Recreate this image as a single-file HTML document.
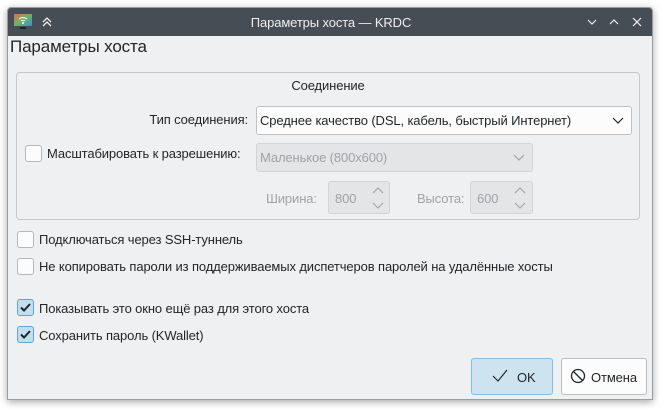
<!DOCTYPE html>
<html><head><meta charset="utf-8"><style>
*{box-sizing:border-box;margin:0;padding:0}
body{width:667px;height:410px;background:#fff;font-family:"Liberation Sans","DejaVu Sans",sans-serif;font-size:13px;color:#232629;position:relative;overflow:hidden}
.abs{position:absolute}
.win{left:7px;top:7px;width:646px;height:393px;background:#eff0f1;border:1px solid #9a9ea3;box-shadow:0 2px 8px rgba(0,0,0,.35);border-radius:4px 4px 0 0;overflow:hidden}
.title{left:0;top:0;width:646px;height:28px;background:#474d54;color:#eceff1;font-size:13px}
.t{white-space:nowrap;letter-spacing:-0.12px}
.cb{width:17px;height:17px;border:1px solid #b5b8bb;border-radius:3px;background:#fcfcfc}
.cbc{background:#c2dff0;border-color:#5fa3d3}
.combo{border:1px solid #bfc2c5;border-radius:3px;background:#fcfcfc}
.dis{background:#e3e5e7;border-color:#d2d4d6;color:#a0a3a6}
.btn{border:1px solid #bcbfc2;border-radius:3px;background:#fcfcfc}
</style></head><body>
<div class="abs win">
 <div class="abs title">
  <svg class="abs" style="left:6px;top:6px" width="18" height="16"><defs><linearGradient id="g" x1="0" y1="0" x2="1" y2="1"><stop offset="0" stop-color="#e06a4a"/><stop offset=".5" stop-color="#6bb36a"/><stop offset="1" stop-color="#3d8ad8"/></linearGradient></defs><rect x="0" y="0" width="18" height="12" fill="url(#g)"/><rect x="6" y="13" width="6" height="2" fill="#222"/><path d="M5 5 Q9 2 13 5 M7 7 Q9 5.5 11 7" stroke="#fff" stroke-width="1" fill="none"/><circle cx="9" cy="9" r="1" fill="#fff"/></svg>
  <svg class="abs" style="left:33px;top:8px" width="12" height="12"><path d="M2 6 L6 2 L10 6 M2 10 L6 6 L10 10" stroke="#eceff1" stroke-width="1.3" fill="none"/></svg>
  <div class="abs t" style="left:0;width:646px;text-align:center;top:7px">Параметры хоста — KRDC</div>
  <svg class="abs" style="left:578px;top:8px" width="62" height="12" stroke="#eceff1" stroke-width="1.2" fill="none"><path d="M2 4 L6 8 L10 4"/><path d="M24 8 L28 4 L32 8"/><path d="M47 2 L55 10 M55 2 L47 10"/></svg>
 </div>
 <div class="abs t" style="left:2px;top:29px;font-size:17px">Параметры хоста</div>
 <div class="abs" style="left:8px;top:64px;width:624px;height:148px;border:1px solid #c5c8cb;border-radius:4px"></div>
 <div class="abs t" style="left:0;width:640px;text-align:center;top:70px">Соединение</div>
 <div class="abs t" style="left:40px;width:200px;text-align:right;top:104px">Тип соединения:</div>
 <div class="abs combo" style="left:248px;top:98px;width:376px;height:29px"></div>
 <div class="abs t" style="left:252px;top:105px">Среднее качество (DSL, кабель, быстрый Интернет)</div>
 <svg class="abs" style="left:604px;top:109px" width="12" height="8"><path d="M1 1 L6 6 L11 1" stroke="#232629" stroke-width="1.2" fill="none"/></svg>
 <div class="abs cb" style="left:17px;top:137px"></div>
 <div class="abs t" style="left:39px;top:138px">Масштабировать к разрешению:</div>
 <div class="abs combo dis" style="left:248px;top:135px;width:277px;height:29px"></div>
 <div class="abs t" style="left:252px;top:142px;color:#a0a3a6">Маленькое (800x600)</div>
 <svg class="abs" style="left:505px;top:146px" width="12" height="8"><path d="M1 1 L6 6 L11 1" stroke="#a0a3a6" stroke-width="1.2" fill="none"/></svg>
 <div class="abs t" style="left:258px;top:183px;color:#a0a3a6">Ширина:</div>
 <div class="abs combo dis" style="left:320px;top:173px;width:62px;height:33px"></div>
 <div class="abs t" style="left:327px;top:183px;color:#a0a3a6">800</div>
 <svg class="abs" style="left:364px;top:178px" width="12" height="24" stroke="#a0a3a6" stroke-width="1.1" fill="none"><path d="M1 7 L6 2 L11 7 M1 17 L6 22 L11 17"/></svg>
 <div class="abs t" style="left:409px;top:183px;color:#a0a3a6">Высота:</div>
 <div class="abs combo dis" style="left:462px;top:173px;width:63px;height:33px"></div>
 <div class="abs t" style="left:469px;top:183px;color:#a0a3a6">600</div>
 <svg class="abs" style="left:506px;top:178px" width="12" height="24" stroke="#a0a3a6" stroke-width="1.1" fill="none"><path d="M1 7 L6 2 L11 7 M1 17 L6 22 L11 17"/></svg>
 <div class="abs cb" style="left:9px;top:223px"></div>
 <div class="abs t" style="left:31px;top:224px">Подключаться через SSH-туннель</div>
 <div class="abs cb" style="left:9px;top:250px"></div>
 <div class="abs t" style="left:31px;top:251px">Не копировать пароли из поддерживаемых диспетчеров паролей на удалённые хосты</div>
 <div class="abs cb cbc" style="left:9px;top:291px"></div>
 <svg class="abs" style="left:11px;top:294px" width="13" height="11"><path d="M2 5.5 L5 8.5 L11 2" stroke="#232629" stroke-width="2" fill="none"/></svg>
 <div class="abs t" style="left:31px;top:293px">Показывать это окно ещё раз для этого хоста</div>
 <div class="abs cb cbc" style="left:9px;top:318px"></div>
 <svg class="abs" style="left:11px;top:321px" width="13" height="11"><path d="M2 5.5 L5 8.5 L11 2" stroke="#232629" stroke-width="2" fill="none"/></svg>
 <div class="abs t" style="left:31px;top:320px">Сохранить пароль (KWallet)</div>
 <div class="abs btn" style="left:463px;top:350px;width:82px;height:37px;background:#cde3f0;border-color:#88bde0"></div>
 <svg class="abs" style="left:484px;top:361px" width="16" height="14"><path d="M1 7 L6 12 L15 1" stroke="#232629" stroke-width="1.2" fill="none"/></svg>
 <div class="abs t" style="left:509px;top:362px">OK</div>
 <div class="abs btn" style="left:553px;top:350px;width:86px;height:37px"></div>
 <svg class="abs" style="left:562px;top:360px" width="16" height="16" stroke="#232629" stroke-width="1.3" fill="none"><circle cx="8" cy="8" r="6.5"/><path d="M3.5 3.5 L12.5 12.5"/></svg>
 <div class="abs t" style="left:583px;top:362px">Отмена</div>
</div>
</body></html>
